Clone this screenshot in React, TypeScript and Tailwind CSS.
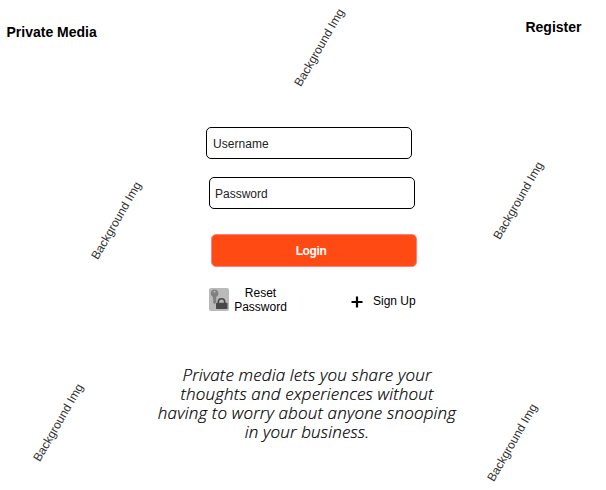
const backgroundLabels = [
  "left-[269px] top-[39px]",
  "left-[66px] top-[212px]",
  "left-[468px] top-[192px]",
  "left-[8px] top-[414px]",
  "left-[462px] top-[434px]",
];

function BackgroundLabel({ place }: { place: string }) {
  return (
    <span
      className={`pointer-events-none absolute flex h-4 w-[100px] translate-x-[0.2px] translate-y-[0.5px] -rotate-60 items-center justify-center text-xs leading-none whitespace-nowrap text-[#333] ${place}`}
    >
      Background Img
    </span>
  );
}

function ResetIcon() {
  return (
    <svg width="20" height="23" viewBox="0 0 20 23" aria-hidden="true">
      <rect width="20" height="23" rx="2" fill="#bababa" />
      <path
        fill="#808080"
        fillRule="evenodd"
        d="M5.5 1.5a3.9 3.9 0 0 1 1.7 7.4V14.5l-1.5 1.7-1.7-1.6v-1.2l.8-.8-.8-.9V8.9A3.9 3.9 0 0 1 5.5 1.5ZM5.5 2.7a1 1 0 1 0 0 2 1 1 0 0 0 0-2Z"
      />
      <path
        fill="none"
        stroke="#484848"
        strokeWidth="1.6"
        d="M9.3 15.5v-1.5a3.2 3.2 0 0 1 6.4 0v1.5"
      />
      <rect x="7" y="14.8" width="11.5" height="6.2" rx="0.8" fill="#484848" />
    </svg>
  );
}

export default function App() {
  return (
    <div className="relative h-[490px] w-[606px] overflow-hidden bg-white font-['Liberation_Sans',Arial,sans-serif] text-xs text-black">
      <header className="flex h-[127px] items-start justify-between pr-[24.5px] pl-[6.5px] text-sm leading-4 font-bold">
        <h1 className="mt-6">Private Media</h1>
        <a className="mt-[19px]">Register</a>
      </header>

      <main>
        <form className="ml-[206px] flex w-[212px] flex-col">
          <div className="flex h-8 w-[206px] items-center rounded-[5px] border border-black pt-px pl-1.5 tracking-[0.04px] text-[#222]">
            Username
          </div>
          <div className="mt-[18px] ml-[3px] flex h-8 w-[206px] items-center rounded-[5px] border border-black pt-px pl-[5px] text-[#222]">
            Password
          </div>
          <button
            type="button"
            className="mt-[25px] ml-[5px] flex h-[33px] w-[206px] items-center justify-center rounded-[5px] border border-[#ff8080] bg-[#ff4a14] pt-px pr-[6px] font-bold tracking-[-0.4px] text-white"
          >
            Login
          </button>
        </form>

        <div className="mt-[19px] ml-[209px] flex h-[30px] w-[210px] items-start">
          <div className="mt-[2px]">
            <ResetIcon />
          </div>
          <a className="ml-[5px] w-[53px] text-center leading-[14px]">Reset Password</a>
          <svg className="mt-[10px] ml-[64px]" width="12" height="12" viewBox="0 0 12 12" aria-hidden="true">
            <path d="M6 0.5v11M0.5 6h11" stroke="#000" strokeWidth="2.2" />
          </svg>
          <a className="mt-2 ml-[10px] leading-[14px] whitespace-nowrap">Sign Up</a>
        </div>

        <p className="mt-[49px] ml-[147px] w-[320px] text-center font-['Open_Sans',sans-serif] text-[17px] leading-[19px] font-light tracking-[0.16px] text-black italic [-webkit-text-stroke:0.2px_#000]">
          Private media lets you share your
          <br />
          thoughts and experiences without
          <br />
          having to worry about anyone snooping
          <br />
          in your business.
        </p>
      </main>

      {backgroundLabels.map((place) => (
        <BackgroundLabel key={place} place={place} />
      ))}
    </div>
  );
}
